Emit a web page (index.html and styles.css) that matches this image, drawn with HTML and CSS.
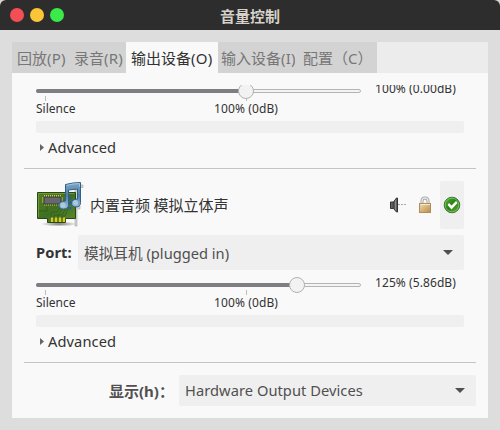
FILE: index.html
```html
<!DOCTYPE html>
<html lang="zh-CN">
<head>
<meta charset="utf-8">
<title>音量控制</title>
<link rel="stylesheet" href="styles.css">
</head>
<body>
<div class="window">
  <header class="titlebar">
    <div class="controls"><i class="dot close"></i><i class="dot min"></i><i class="dot max"></i></div>
    <h1 class="title">音量控制</h1>
  </header>
  <main class="panel">
    <nav class="tabs">
      <span class="tab t-play">回放<span class="key">(P)</span></span>
      <span class="tab t-rec">录音<span class="key">(R)</span></span>
      <span class="tab t-out active">输出设备<span class="key">(O)</span></span>
      <span class="tab t-in">输入设备<span class="key">(I)</span></span>
      <span class="tab t-conf">配置（C）</span>
    </nav>
    <div class="viewport">
      <section class="device">
        <div class="volume">
          <div class="scale">
            <svg width="327" height="25" viewBox="0 0 327 25">
              <rect x=".5" y="13.5" width="324" height="3" rx="1.5" fill="#f4f4f4" stroke="#b4b4b4"/>
              <rect x="0" y="13" width="210" height="4" rx="2" fill="#7c7e83"/>
              <path d="M9.5 20v5M210.500 20v5" stroke="#bdbdbd"/>
              <circle cx="210" cy="15" r="7.500" fill="#f2f2f2" stroke="#b2b2b2"/>
            </svg>
            <div class="marks"><span class="silence">Silence</span><span class="full">100% (0dB)</span></div>
          </div>
          <span class="value">100% (0.00dB)</span>
        </div>
        <div class="meter"></div>
        <div class="expander"><svg width="4" height="7" viewBox="0 0 4 7"><path d="M0 0L4 3.500L0 7z" fill="#666"/></svg><span class="adv">Advanced</span></div>
      </section>
      <section class="device">
        <div class="head">
          <svg class="card" width="48" height="48" viewBox="0 0 48 48">
            <defs>
              <linearGradient id="pcb" x1="0" y1="0" x2="1" y2="1"><stop offset="0" stop-color="#527f20"/><stop offset=".5" stop-color="#3f7022"/><stop offset="1" stop-color="#5d8a2b"/></linearGradient>
              <linearGradient id="note" x1="0" y1="0" x2="0" y2="1"><stop offset="0" stop-color="#7da6c9"/><stop offset=".5" stop-color="#4c80aa"/><stop offset="1" stop-color="#a4c6de"/></linearGradient>
              <radialGradient id="shadow"><stop offset="0" stop-color="#777"/><stop offset="1" stop-color="#777" stop-opacity="0"/></radialGradient>
            </defs>
            <ellipse cx="23" cy="43" rx="18" ry="2.500" fill="url(#shadow)"/>
            <path d="M40 4h7v2.500h-5V25h2v3h-3v17h-2V4z" fill="#d2d4d1" stroke="#a4a6a2" stroke-width=".6"/>
            <path d="M1.500 11.500h38v26h-10v4h-18v-4h-10z" fill="url(#pcb)" stroke="#294812"/>
            <path d="M2.500 36V12.500h36" fill="none" stroke="#77a044" stroke-width=".8"/>
            <path d="M15 37v-4q0-2 3-2h3l3-4M18 37v-3h4l5-7M22 37v-3h4l4-7M26 37v-2h3l3-7M3 30h8V26" fill="none" stroke="#2d5719" stroke-width=".7"/>
            <path d="M8 15h17M8 23.500h17" stroke="#d9cc42" stroke-width="2" stroke-dasharray="1 1"/>
            <path d="M7 16.500v6M26 16.500v6" stroke="#d9cc42" stroke-width="2" stroke-dasharray="1 1"/>
            <rect x="8" y="16" width="17" height="7" fill="#66686b" stroke="#36383c"/>
            <path d="M16 36.500v4.500M20 36.500v4.500M24 36.500v4.500M28 36.500v4.500" stroke="#e0c61c" stroke-width="2.200"/>
            <path d="M34 16v14" stroke="#245baa" stroke-width="2.500" stroke-dasharray="2.500 2.500"/>
            <path fill-rule="evenodd" d="M29.500 3.500Q37 1.500 44.500 1.500v20q0 4.500-4.500 4.500-4.500 0-4.500-4t6-4V8L32.500 9v14.500q0 4.500-5 4.500-4.500 0-4.500-4t6.500-4z" fill="url(#note)" stroke="#315f85"/>
            <path d="M30.500 4.500Q37 2.500 43.500 2.500v3" fill="none" stroke="#a9cae2" stroke-width=".9"/>
            <circle cx="27" cy="24" r="2.500" fill="#a9cbe2"/><circle cx="39.500" cy="21.500" r="2.500" fill="#a9cbe2"/>
          </svg>
          <span class="name"><span>内置音频</span> <span>模拟立体声</span></span>
          <svg class="mute" width="18" height="18" viewBox="0 0 18 18">
            <defs><linearGradient id="spk"><stop offset="0" stop-color="#777"/><stop offset=".5" stop-color="#3c3f3f"/><stop offset=".75" stop-color="#999"/><stop offset="1" stop-color="#111"/></linearGradient></defs>
            <path d="M1.500 6h3l3-4h1v14h-1L4.500 12.500h-3z" fill="url(#spk)" stroke="#303333"/>
            <path d="M9 8.500h9" stroke="#aaa" stroke-dasharray="2 1"/>
          </svg>
          <svg class="lock" width="14" height="18" viewBox="0 0 14 18">
            <defs><linearGradient id="gold" x1="0" y1="0" x2="1" y2="1"><stop offset="0" stop-color="#f1dcb3"/><stop offset="1" stop-color="#b98b45"/></linearGradient></defs>
            <path d="M4 8V5q0-3 3-3t3 3v3" fill="none" stroke="#a0a2a0" stroke-width="3"/><path d="M4 8V5q0-3 3-3t3 3v3" fill="none" stroke="#e3e4e2" stroke-width="1.400"/>
            <rect x="1.500" y="7.500" width="11" height="9" fill="url(#gold)" stroke="#b18d56"/><path d="M2 8.500h10" stroke="#f8eccf"/>
          </svg>
          <span class="default">
            <svg width="18" height="18" viewBox="0 0 18 18">
              <defs><linearGradient id="ok" x1="0" y1="0" x2="1" y2="1"><stop offset="0" stop-color="#53b928"/><stop offset=".5" stop-color="#268010"/><stop offset="1" stop-color="#62b72e"/></linearGradient></defs>
              <circle cx="9" cy="9" r="7.800" fill="url(#ok)" stroke="#286319" stroke-width=".8"/><circle cx="9" cy="9" r="6.800" fill="none" stroke="#94c990" stroke-width=".7"/>
              <path d="M4.500 9l1.500-2 2.500 2.500 4.500-4.500 1.500 2-6 6.500z" fill="#fff"/>
            </svg>
          </span>
        </div>
        <div class="port">
          <b class="port-label">Port:</b>
          <div class="combo"><span>模拟耳机<span class="plug"> (plugged in)</span></span><svg width="10" height="5" viewBox="0 0 10 5"><path d="M0 0h10L5 5z" fill="#505050"/></svg></div>
        </div>
        <div class="volume">
          <div class="scale">
            <svg width="327" height="25" viewBox="0 0 327 25">
              <rect x=".5" y="13.500" width="324" height="3" rx="1.500" fill="#f4f4f4" stroke="#b4b4b4"/>
              <rect x="0" y="13" width="261" height="4" rx="2" fill="#7c7e83"/>
              <path d="M9.500 20v5M210.500 20v5" stroke="#bdbdbd"/>
              <circle cx="261" cy="15" r="7.500" fill="#f2f2f2" stroke="#b2b2b2"/>
            </svg>
            <div class="marks"><span class="silence">Silence</span><span class="full">100% (0dB)</span></div>
          </div>
          <span class="value">125% (5.86dB)</span>
        </div>
        <div class="meter"></div>
        <div class="expander"><svg width="4" height="7" viewBox="0 0 4 7"><path d="M0 0L4 3.500L0 7z" fill="#666"/></svg><span class="adv">Advanced</span></div>
      </section>
    </div>
    <footer class="filter">
      <b class="filter-label">显示(h)：</b>
      <div class="combo"><span class="hw">Hardware Output Devices</span><svg width="10" height="5" viewBox="0 0 10 5"><path d="M0 0h10L5 5z" fill="#505050"/></svg></div>
    </footer>
  </main>
</div>
</body>
</html>
```
FILE: styles.css
```css
* { box-sizing: border-box; }
body { margin: 0; background: #d8d6c8; color: #333; font: 14.67px/20px "Noto Sans", "Noto Sans CJK SC", sans-serif; white-space: nowrap; }
svg { display: block; flex: none; }
.window { width: 500px; height: 430px; background: #ddd; border-radius: 6px 6px 0 0; overflow: hidden; }
.titlebar { height: 30px; background: #2d2d2d; display: grid; grid-template-columns: 100px 1fr 100px; align-items: center; }
.controls { display: flex; gap: 6px; padding-left: 10px; }
.dot { width: 14px; height: 14px; border-radius: 50%; }
.close { background: #f24e56; }
.min { background: #fac536; }
.max { background: #39ea49; }
.title { margin: 2px 0 0; text-align: center; font-size: 15px; line-height: 20px; font-weight: 700; color: #d6d2ca; }
.panel { width: 476px; height: 376px; margin: 12px; background: #f9f9f9; }
.tabs { height: 31px; background: #ececec; display: flex; font-size: 15px; color: #777; }
.key { letter-spacing: .2px; }
.tab { background: #d3d3d3; padding: 6px 0 0 5px; height: 31px; }
.tab.active { background: #f9f9f9; color: #333; }
.t-play { width: 57px; }
.t-rec { width: 57px; }
.t-out { width: 92px; }
.t-in { width: 77px; padding-left: 3px; }
.t-conf { width: 82px; padding-left: 8px; }
.viewport { height: 278px; margin: 12px 12px 0; overflow: hidden; display: flex; flex-direction: column; justify-content: flex-end; }
.device { flex: none; padding: 0 12px; border-bottom: 1px solid #c4c4c4; }
.head { height: 48px; margin: 12px 0 6px; display: flex; align-items: center; }
.name { margin-left: 6px; width: 299px; font-size: 15px; word-spacing: -.5px; }
.mute { margin-right: 11px; }
.lock { margin-right: 8px; }
.default { width: 24px; height: 48px; background: #efefef; border-radius: 2px; display: grid; place-items: center; }
.port { display: flex; align-items: center; height: 35px; }
.port-label { width: 42px; margin-top: -2px; letter-spacing: .1px; }
.combo { flex: 1; height: 100%; background: #efefef; border-radius: 2px; display: flex; align-items: center; justify-content: space-between; padding: 0 11px 0 6px; color: #505050; font-size: 14.67px; }
.hw { margin-top: -1px; letter-spacing: .05px; }
.volume { height: 45px; display: flex; font-size: 12px; line-height: 14px; }
.scale { width: 339px; }
.marks { display: flex; justify-content: space-between; width: 242px; margin-top: 1px; }
.full { letter-spacing: .1px; }
.value { margin-top: 6px; letter-spacing: .08px; }
.meter { height: 12px; background: #efefef; border-radius: 2px; }
.expander { height: 35px; padding: 0 0 7px 4px; display: flex; align-items: center; gap: 4px; }
.adv { letter-spacing: .1px; }
.filter { height: 31px; margin: 12px 12px 0; display: flex; align-items: center; }
.filter-label { width: 155px; padding-left: 85px; color: #505050; font-size: 15px; }
```
